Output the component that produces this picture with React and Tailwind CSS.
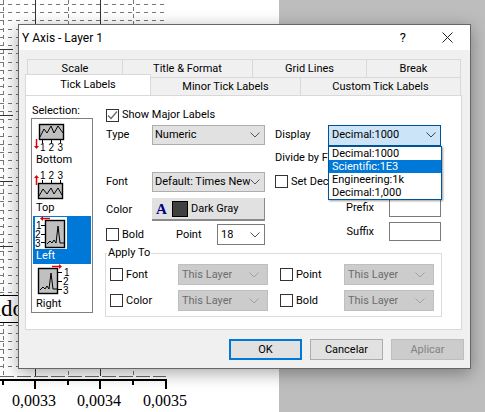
import React from "react";

const FONT = "font-['Roboto','Noto_Sans',sans-serif]";
const DIGIT = { fontSize: 10, fontFamily: "'Liberation Sans',sans-serif", fill: "#000" };

function Chevron({ color = "#555" }) {
  return (
    <svg width="10" height="6" viewBox="0 0 10 6" className="shrink-0">
      <path d="M0.5 0.5 L5 5 L9.5 0.5" fill="none" stroke={color} strokeWidth="1" />
    </svg>
  );
}

function Check({ checked }) {
  return (
    <span className="w-[13px] h-[13px] border border-[#333] bg-white shrink-0 flex items-center justify-center">
      {checked && (
        <svg width="11" height="11" viewBox="0 0 11 11">
          <path d="M1 5.5 L4 8.5 L10 1.5" fill="none" stroke="#666" strokeWidth="1.2" />
        </svg>
      )}
    </span>
  );
}

function Select({ text, className, chevron }) {
  return (
    <div className={`flex items-center justify-between pl-[2px] pr-[4px] border ${className}`}>
      <span className="whitespace-nowrap overflow-hidden">{text}</span>
      <Chevron color={chevron} />
    </div>
  );
}

const GRAY_SEL = "h-[20px] w-[113px] bg-[#e1e1e1] border-[#adadad]";

function Disabled() {
  return (
    <Select
      text="This Layer"
      chevron="#a0a0a0"
      className="h-[21px] w-[90px] bg-[#cccccc] border-[#bfbfbf] text-[#6d6d6d] pl-[3px] pr-[8px]"
    />
  );
}

function ApplyRow({ a, b }) {
  return (
    <div className="flex h-[21px] gap-[12px]">
      <div className="flex items-center justify-between w-[158px]">
        <div className="flex items-center gap-[3px]"><Check /><span>{a}</span></div>
        <Disabled />
      </div>
      <div className="flex items-center justify-between w-[154px]">
        <div className="flex items-center gap-[3px]"><Check /><span>{b}</span></div>
        <Disabled />
      </div>
    </div>
  );
}

function IconBottom() {
  return (
    <svg width="58" height="33" viewBox="0 0 58 33">
      <rect x="6.5" y="4.5" width="24" height="15" fill="#c0c0c0" stroke="#000" strokeWidth="1.4" />
      <path d="M7 17 L11 9 L14 13 L18 6 L21 13 L25 6 L30 13" fill="none" stroke="#000" />
      <path d="M9.5 20 V23 M18.5 20 V23 M27.5 20 V23" stroke="#000" />
      <text x="7" y="31" {...DIGIT}>1</text>
      <text x="15.5" y="31" {...DIGIT}>2</text>
      <text x="24.5" y="31" {...DIGIT}>3</text>
      <path d="M3.5 19 V26" stroke="#e00000" strokeWidth="1.5" />
      <path d="M1 26 H6 L3.5 29 Z" fill="#e00000" />
    </svg>
  );
}

function IconTop() {
  return (
    <svg width="58" height="33" viewBox="0 0 58 33">
      <text x="7" y="11" {...DIGIT}>1</text>
      <text x="15.5" y="11" {...DIGIT}>2</text>
      <text x="24.5" y="11" {...DIGIT}>3</text>
      <path d="M9.5 12 V15 M18.5 12 V15 M27.5 12 V15" stroke="#000" />
      <rect x="5.5" y="15.5" width="24" height="15" fill="#c0c0c0" stroke="#000" strokeWidth="1.4" />
      <path d="M6 28 L10 21 L14 26 L18 20 L21 26 L25 20 L29 27" fill="none" stroke="#000" />
      <path d="M3.5 10 V17" stroke="#e00000" strokeWidth="1.5" />
      <path d="M1 10 H6 L3.5 7 Z" fill="#e00000" />
    </svg>
  );
}

function IconLeft() {
  return (
    <svg width="58" height="33" viewBox="0 0 58 33">
      <rect x="2" y="1" width="32" height="32" fill="#fff" />
      <rect x="12.5" y="4.5" width="19" height="27" fill="#c0c0c0" stroke="#000" strokeWidth="1.4" />
      <path d="M14 28 L17 25 L19 27 L21 24 L23 27 L25 10 L27 27 L31 27" fill="none" stroke="#000" />
      <path d="M8 9.5 H12 M8 18.5 H12 M8 26.5 H12" stroke="#000" />
      <text x="3" y="13" {...DIGIT}>1</text>
      <text x="2" y="22" {...DIGIT}>2</text>
      <text x="2" y="31" {...DIGIT}>3</text>
      <path d="M10 2.5 H17" stroke="#e00000" strokeWidth="1.5" />
      <path d="M10 0 V5 L7 2.5 Z" fill="#e00000" />
    </svg>
  );
}

function IconRight() {
  return (
    <svg width="58" height="33" viewBox="0 0 58 33">
      <rect x="5.5" y="4.5" width="19" height="25" fill="#c0c0c0" stroke="#000" strokeWidth="1.4" />
      <path d="M7 26 L10 23 L12 25 L14 22 L16 25 L18 9 L20 25 L24 25" fill="none" stroke="#000" />
      <path d="M25 8.5 H29 M25 17.5 H29 M25 25.5 H29" stroke="#000" />
      <text x="31" y="12" {...DIGIT}>1</text>
      <text x="30" y="21" {...DIGIT}>2</text>
      <text x="30" y="30" {...DIGIT}>3</text>
      <path d="M19 2.5 H26" stroke="#e00000" strokeWidth="1.5" />
      <path d="M26 0 V5 L29 2.5 Z" fill="#e00000" />
    </svg>
  );
}

function ListItem({ icon, label, selected }) {
  return (
    <div className={`h-[48px] w-[58px] flex flex-col ${selected ? "bg-[#0078d7] text-white" : ""}`}>
      <div className="h-[33px] shrink-0">{icon}</div>
      <div className="pl-[3px] leading-[14px]">{label}</div>
    </div>
  );
}

function Chart() {
  const ys = [];
  for (let i = 0; i < 50; i++) ys.push(4 + i * 8.22);
  return (
    <svg width="279" height="412" viewBox="0 0 279 412" className="absolute left-0 top-0">
      {ys.filter((y) => y < 370).map((y) => (
        <line key={y} x1="0" x2={y < 24 ? 166 : 18} y1={Math.round(y) + 0.5} y2={Math.round(y) + 0.5} stroke="#777" strokeDasharray="4 4" />
      ))}
      {[3, 68, 133].map((x) => (
        <line key={x} x1={x + 0.5} x2={x + 0.5} y1="0" y2="376" stroke="#777" strokeDasharray="4 3" />
      ))}
      {[35, 100].map((x) => (
        <line key={x} x1={x + 0.5} x2={x + 0.5} y1="0" y2="376" stroke="#333" />
      ))}
      {[49, 115, 181, 246].map((y) => (
        <line key={y} x1="0" x2="13" y1={y + 0.5} y2={y + 0.5} stroke="#333" />
      ))}
      <line x1="0" x2="166" y1="376.5" y2="376.5" stroke="#666" strokeDasharray="14 3" />
      <line x1="0" x2="167" y1="380" y2="380" stroke="#000" strokeWidth="2" />
      {[35, 100, 166].map((x) => (
        <line key={x} x1={x} x2={x} y1="380" y2="389" stroke="#000" strokeWidth="2" />
      ))}
      {[3, 68, 133].map((x) => (
        <line key={x} x1={x} x2={x} y1="380" y2="385" stroke="#000" strokeWidth="2" />
      ))}
    </svg>
  );
}

export default function App() {
  return (
    <div className={`relative w-[485px] h-[412px] overflow-hidden flex ${FONT} text-[11px] leading-[16px] text-black`}>
      <div className="w-[279px] h-full bg-white" />
      <div className="flex-1 h-full bg-[#bdbdbd]" />

      <Chart />
      <div className="absolute left-0 top-[295px] w-[18px] h-[28px] bg-white border-y border-black overflow-hidden">
        <div className="absolute right-[-6px] top-[0px] font-['Liberation_Serif',serif] text-[23px] leading-[26px]">ndo</div>
      </div>
      {[["0,0033", 12], ["0,0034", 77], ["0,0035", 143]].map(([t, x]) => (
        <div key={t} className="absolute top-[392px] font-['Liberation_Serif',serif] text-[16px] leading-[18px]" style={{ left: x }}>
          {t}
        </div>
      ))}

      <div className="absolute left-[18px] top-[24px] w-[453px] h-[345px] border border-[#666] bg-[#f0f0f0] flex flex-col shadow-[0_4px_16px_rgba(0,0,0,0.35)]">
        <div className="h-[25px] bg-white flex items-center pl-[3px] shrink-0 text-[12px]">
          <span className="flex-1">Y Axis - Layer 1</span>
          <span className="text-[13px] mr-[36px]">?</span>
          <svg width="11" height="11" viewBox="0 0 11 11" className="mr-[17px]">
            <path d="M0.5 0.5 L10.5 10.5 M10.5 0.5 L0.5 10.5" stroke="#222" strokeWidth="1" />
          </svg>
        </div>

        <div className="pl-[6px] pt-[9px]">
          <div className="w-[437px]">
            <div className="flex ml-[2px] h-[18px] text-center leading-[18px]">
              <div className="w-[96px] border border-b-0 border-[#d9d9d9]">Scale</div>
              <div className="w-[130px] border border-b-0 border-l-0 border-[#d9d9d9]">Title &amp; Format</div>
              <div className="w-[114px] border border-b-0 border-l-0 border-[#d9d9d9]">Grid Lines</div>
              <div className="w-[94px] border border-b-0 border-l-0 border-[#d9d9d9]">Break</div>
            </div>
            <div className="flex h-[18px] text-center items-end">
              <div className="relative z-10 w-[126px] h-[21px] -mt-[3px] -mb-[1px] self-start bg-white border border-b-0 border-[#d9d9d9] leading-[20px]">Tick Labels</div>
              <div className="w-[150px] h-[18px] border-t border-r border-[#d9d9d9] leading-[18px]">Minor Tick Labels</div>
              <div className="w-[160px] h-[18px] border-t border-r border-[#d9d9d9] leading-[18px]">Custom Tick Labels</div>
            </div>

            <div className="w-[437px] h-[235px] bg-white border border-[#d9d9d9] flex pl-[5px]">
              <div className="w-[62px] pt-[7px] shrink-0">
                <div className="leading-[15px] pl-[1px]">Selection:</div>
                <div className="w-[62px] h-[195px] border border-[#808080] pl-[1px] pt-[1px]">
                  <ListItem icon={<IconBottom />} label="Bottom" />
                  <ListItem icon={<IconTop />} label="Top" />
                  <ListItem icon={<IconLeft />} label="Left" selected />
                  <ListItem icon={<IconRight />} label="Right" />
                </div>
              </div>

              <div className="ml-[13px] pt-[11px] w-[337px] flex flex-col">
                <div className="flex items-center gap-[3px] h-[16px]">
                  <Check checked />
                  <span>Show Major Labels</span>
                </div>

                <div className="flex gap-[10px] mt-[2px] h-[120px]">
                  <div className="w-[159px] flex flex-col">
                    <div className="flex items-center justify-between h-[20px]">
                      <span>Type</span>
                      <Select text="Numeric" className={GRAY_SEL} chevron="#555" />
                    </div>
                    <div className="flex items-center justify-between h-[20px] mt-[27px]">
                      <span>Font</span>
                      <Select text="Default: Times New" className={GRAY_SEL} chevron="#555" />
                    </div>
                    <div className="flex items-center justify-between h-[23px] mt-[6px]">
                      <span>Color</span>
                      <div className="w-[113px] h-[23px] bg-[#e1e1e1] border-b-2 border-r border-b-[#8a8a8a] border-r-[#8a8a8a] flex items-center pl-[4px]">
                        <span className="w-[13px] text-[#000080] font-bold font-['Liberation_Serif',serif] text-[15px] leading-[16px]">A</span>
                        <span className="ml-[3px] w-[16px] h-[16px] bg-[#404040] border border-black" />
                        <span className="ml-[3px]">Dark Gray</span>
                      </div>
                    </div>
                    <div className="flex items-center h-[21px] mt-[3px]">
                      <Check />
                      <span className="ml-[3px]">Bold</span>
                      <span className="ml-[32px]">Point</span>
                      <Select text="18" chevron="#555" className="ml-auto h-[21px] w-[48px] bg-white border-[#7a7a7a] pl-[3px]" />
                    </div>
                  </div>

                  <div className="relative w-[166px] flex flex-col">
                    <div className="flex items-center justify-between h-[20px]">
                      <span>Display</span>
                      <Select text="Decimal:1000" chevron="#444" className="h-[21px] w-[113px] bg-[#cce4f7] border-[#005499] pl-[3px]" />
                    </div>
                    <div className="h-[14px] mt-[6px] leading-[14px]">Divide by F</div>
                    <div className="flex items-center gap-[3px] h-[13px] mt-[10px]">
                      <Check />
                      <span>Set Dec</span>
                    </div>
                    <div className="flex items-center justify-end h-[19px] mt-[10px]">
                      <span>Prefix</span>
                      <span className="ml-[15px] w-[52px] h-[19px] border border-[#7a7a7a] bg-white" />
                    </div>
                    <div className="flex items-center justify-end h-[19px] mt-[5px]">
                      <span>Suffix</span>
                      <span className="ml-[15px] w-[52px] h-[19px] border border-[#7a7a7a] bg-white" />
                    </div>

                    <div className="absolute left-[53px] top-[21px] w-[114px] h-[54px] bg-white border border-[#005499] shadow-[1px_1px_2px_rgba(0,0,0,0.4)] leading-[13px] z-20">
                      <div className="h-[13px] pl-[3px]">Decimal:1000</div>
                      <div className="h-[13px] pl-[3px] bg-[#0078d7] text-white">Scientific:1E3</div>
                      <div className="h-[13px] pl-[3px]">Engineering:1k</div>
                      <div className="h-[13px] pl-[3px]">Decimal:1,000</div>
                    </div>
                  </div>
                </div>

                <div className="relative mt-[8px] -ml-[1px] w-[337px] h-[64px] border border-[#dcdcdc] pl-[4px] pt-[10px] flex flex-col gap-[5px]">
                  <span className="absolute left-[1px] top-[-8px] bg-white px-[1px] leading-[14px]">Apply To</span>
                  <ApplyRow a="Font" b="Point" />
                  <ApplyRow a="Color" b="Bold" />
                </div>
              </div>
            </div>
          </div>
        </div>

        <div className="flex justify-end gap-[8px] mt-[9px] pr-[6px]">
          <div className="w-[73px] h-[21px] bg-[#e1e1e1] border-2 border-[#0078d7] flex items-center justify-center">OK</div>
          <div className="w-[73px] h-[21px] bg-[#e1e1e1] border border-[#adadad] flex items-center justify-center">Cancelar</div>
          <div className="w-[73px] h-[21px] bg-[#cccccc] border border-[#bfbfbf] text-[#838383] flex items-center justify-center">Aplicar</div>
        </div>
      </div>
    </div>
  );
}
